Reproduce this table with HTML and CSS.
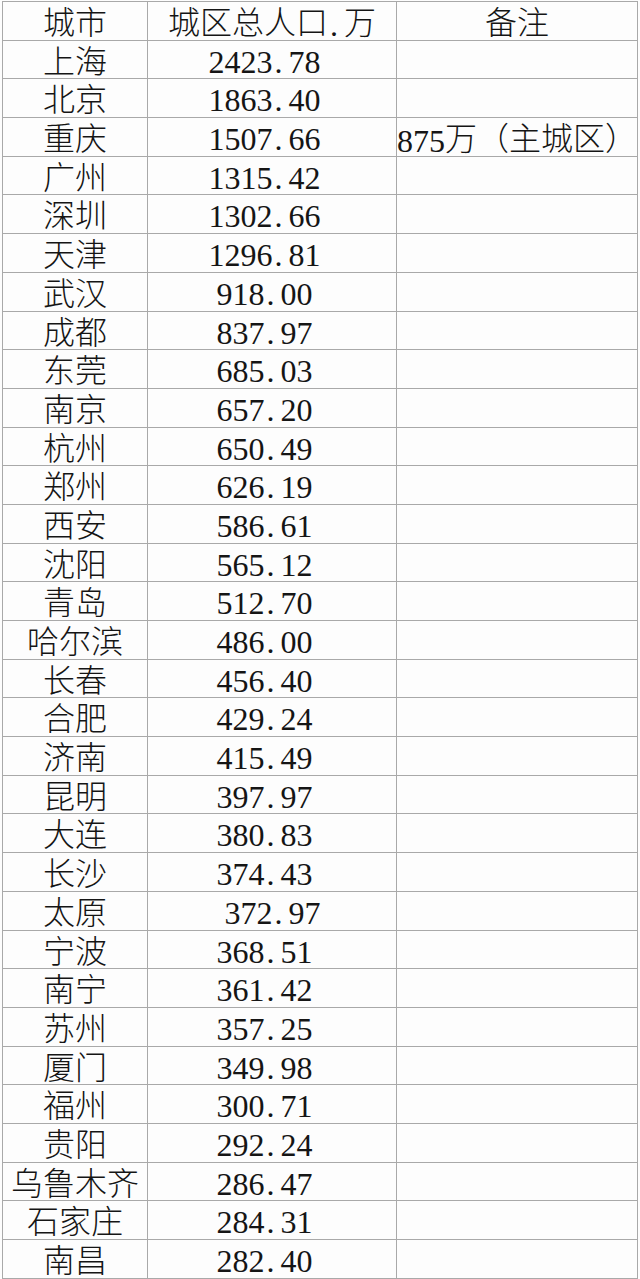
FILE: index.html
```html
<!DOCTYPE html>
<html lang="zh-CN">
<head>
<meta charset="utf-8">
<title>城区总人口</title>
<link rel="stylesheet" href="styles.css">
</head>
<body>
<div class="sheet">
  <div class="c hd">城市</div><div class="c hd">城区总人口<span class="m"><span class="dot">.</span></span>万</div><div class="c hd">备注</div>
  <div class="c city">上海</div><div class="c num">2423<span class="dot">.</span>78</div><div class="c note"></div>
  <div class="c city">北京</div><div class="c num">1863<span class="dot">.</span>40</div><div class="c note"></div>
  <div class="c city">重庆</div><div class="c num">1507<span class="dot">.</span>66</div><div class="c note"><span class="m">875</span>万（主城区）</div>
  <div class="c city">广州</div><div class="c num">1315<span class="dot">.</span>42</div><div class="c note"></div>
  <div class="c city">深圳</div><div class="c num">1302<span class="dot">.</span>66</div><div class="c note"></div>
  <div class="c city">天津</div><div class="c num">1296<span class="dot">.</span>81</div><div class="c note"></div>
  <div class="c city">武汉</div><div class="c num">918<span class="dot">.</span>00</div><div class="c note"></div>
  <div class="c city">成都</div><div class="c num">837<span class="dot">.</span>97</div><div class="c note"></div>
  <div class="c city">东莞</div><div class="c num">685<span class="dot">.</span>03</div><div class="c note"></div>
  <div class="c city">南京</div><div class="c num">657<span class="dot">.</span>20</div><div class="c note"></div>
  <div class="c city">杭州</div><div class="c num">650<span class="dot">.</span>49</div><div class="c note"></div>
  <div class="c city">郑州</div><div class="c num">626<span class="dot">.</span>19</div><div class="c note"></div>
  <div class="c city">西安</div><div class="c num">586<span class="dot">.</span>61</div><div class="c note"></div>
  <div class="c city">沈阳</div><div class="c num">565<span class="dot">.</span>12</div><div class="c note"></div>
  <div class="c city">青岛</div><div class="c num">512<span class="dot">.</span>70</div><div class="c note"></div>
  <div class="c city">哈尔滨</div><div class="c num">486<span class="dot">.</span>00</div><div class="c note"></div>
  <div class="c city">长春</div><div class="c num">456<span class="dot">.</span>40</div><div class="c note"></div>
  <div class="c city">合肥</div><div class="c num">429<span class="dot">.</span>24</div><div class="c note"></div>
  <div class="c city">济南</div><div class="c num">415<span class="dot">.</span>49</div><div class="c note"></div>
  <div class="c city">昆明</div><div class="c num">397<span class="dot">.</span>97</div><div class="c note"></div>
  <div class="c city">大连</div><div class="c num">380<span class="dot">.</span>83</div><div class="c note"></div>
  <div class="c city">长沙</div><div class="c num">374<span class="dot">.</span>43</div><div class="c note"></div>
  <div class="c city">太原</div><div class="c num shift">372<span class="dot">.</span>97</div><div class="c note"></div>
  <div class="c city">宁波</div><div class="c num">368<span class="dot">.</span>51</div><div class="c note"></div>
  <div class="c city">南宁</div><div class="c num">361<span class="dot">.</span>42</div><div class="c note"></div>
  <div class="c city">苏州</div><div class="c num">357<span class="dot">.</span>25</div><div class="c note"></div>
  <div class="c city">厦门</div><div class="c num">349<span class="dot">.</span>98</div><div class="c note"></div>
  <div class="c city">福州</div><div class="c num">300<span class="dot">.</span>71</div><div class="c note"></div>
  <div class="c city">贵阳</div><div class="c num">292<span class="dot">.</span>24</div><div class="c note"></div>
  <div class="c city">乌鲁木齐</div><div class="c num">286<span class="dot">.</span>47</div><div class="c note"></div>
  <div class="c city">石家庄</div><div class="c num">284<span class="dot">.</span>31</div><div class="c note"></div>
  <div class="c city">南昌</div><div class="c num">282<span class="dot">.</span>40</div><div class="c note"></div>
</div>
</body>
</html>
```
FILE: styles.css
```css
html, body {
  margin: 0;
  padding: 0;
  background: #fdfdfd;
}

.sheet {
  margin: 1px 0 0 2px;
  width: 636px;
  display: grid;
  grid-template-columns: 145px 249px 241px;
  grid-auto-rows: 38.7px;
  border-left: 1px solid #a9a9a9;
  border-top: 1px solid #a9a9a9;
  box-sizing: border-box;
  color: #151515;
  font-family: "Noto Sans CJK SC", sans-serif;
  font-weight: 300;
  font-size: 32px;
}

.c {
  border-right: 1px solid #a9a9a9;
  border-bottom: 1px solid #a9a9a9;
  line-height: 37.7px;
  text-align: center;
  white-space: nowrap;
  overflow: visible;
  box-sizing: border-box;
}

.num {
  font-family: "Liberation Serif", serif;
  font-weight: 400;
  font-size: 32px;
  padding: 3px 15px 0 0;
}

.num.shift {
  padding-left: 16px;
}

.m {
  font-family: "Liberation Serif", serif;
  font-weight: 400;
  font-size: 32px;
  position: relative;
  top: 2px;
}

.dot {
  display: inline-block;
  width: 16px;
  padding-left: 2px;
  box-sizing: border-box;
  text-align: left;
}
```
